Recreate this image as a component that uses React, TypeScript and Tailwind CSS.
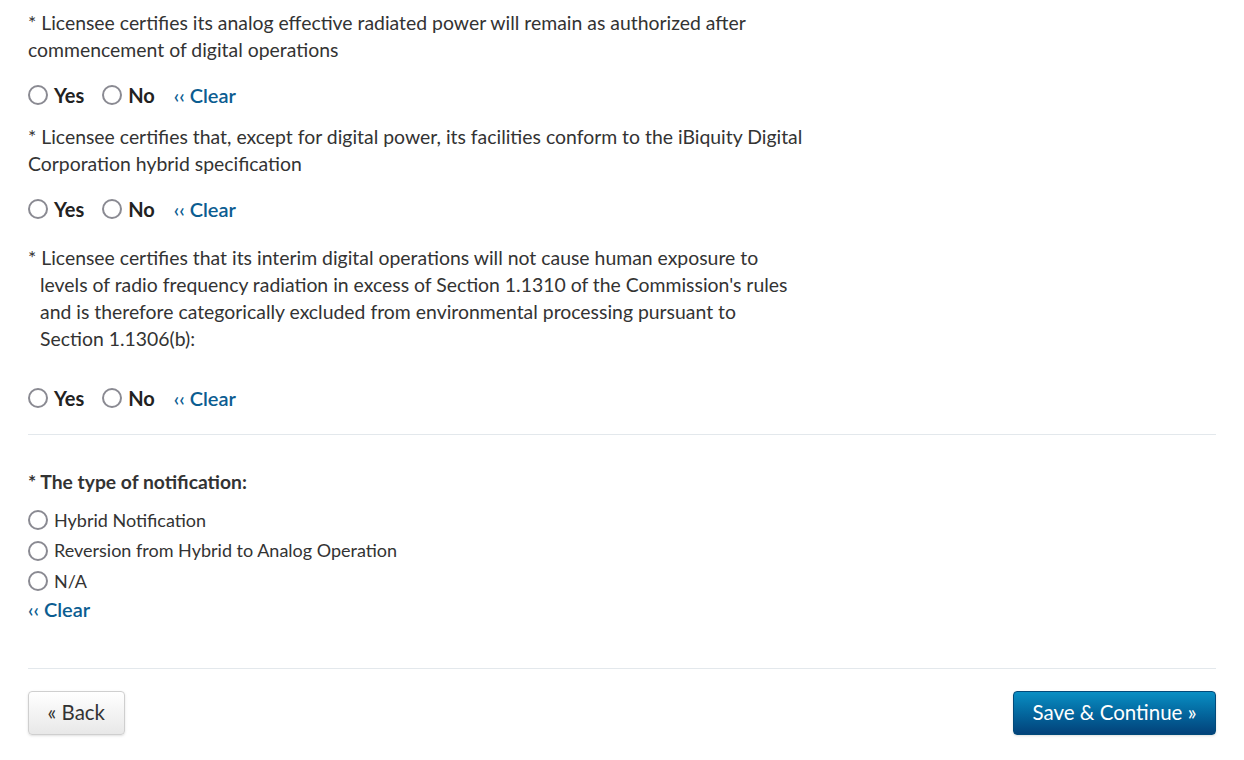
import React, { useState } from 'react';

type YN = 'yes' | 'no' | null;

const Radio: React.FC<{ checked: boolean; onClick: () => void }> = ({ checked, onClick }) => (
  <span
    onClick={onClick}
    className="inline-flex h-[20px] w-[20px] shrink-0 cursor-pointer items-center justify-center rounded-full border-[2.5px] border-[#8a8a92] bg-white"
  >
    {checked && <span className="h-[10px] w-[10px] rounded-full bg-[#0b5d91]" />}
  </span>
);

const ClearLink: React.FC<{ onClick: () => void }> = ({ onClick }) => (
  <a
    href="#"
    onClick={(e) => {
      e.preventDefault();
      onClick();
    }}
    className="text-[20px] font-semibold text-[#0b5d91] hover:underline"
  >
    <span className="mr-[5px] text-[19px]">‹‹</span>Clear
  </a>
);

const YesNo: React.FC<{ value: YN; setValue: (v: YN) => void; className?: string }> = ({
  value,
  setValue,
  className,
}) => (
  <div className={`flex h-[24px] items-center ${className ?? ''}`}>
    <label className="flex items-center gap-[6px]">
      <Radio checked={value === 'yes'} onClick={() => setValue('yes')} />
      <span className="text-[20px] font-bold text-[#222]">Yes</span>
    </label>
    <label className="ml-[18px] flex items-center gap-[6px]">
      <Radio checked={value === 'no'} onClick={() => setValue('no')} />
      <span className="text-[20px] font-bold text-[#222]">No</span>
    </label>
    <span className="ml-[19px]">
      <ClearLink onClick={() => setValue(null)} />
    </span>
  </div>
);

const options = ['Hybrid Notification', 'Reversion from Hybrid to Analog Operation', 'N/A'];

export default function App() {
  const [q1, setQ1] = useState<YN>(null);
  const [q2, setQ2] = useState<YN>(null);
  const [q3, setQ3] = useState<YN>(null);
  const [kind, setKind] = useState<string | null>(null);

  return (
    <div
      className="min-h-screen bg-white px-[28px] text-[19.4px] leading-[27px] text-[#333]"
      style={{ fontFamily: 'Lato, "Open Sans", "Liberation Sans", sans-serif' }}
    >
      <div className="w-[790px] pt-[9px]">
        <p>* Licensee certifies its analog effective radiated power will remain as authorized after commencement of digital operations</p>
        <YesNo value={q1} setValue={setQ1} className="mt-[20px]" />

        <p className="mt-[16px]">
          * Licensee certifies that, except for digital power, its facilities conform to the iBiquity Digital Corporation hybrid specification
        </p>
        <YesNo value={q2} setValue={setQ2} className="mt-[20px]" />

        <p className="mt-[23px] w-[770px] pl-[12px] -indent-[12px]">
          * Licensee certifies that its interim digital operations will not cause human exposure to levels of radio frequency radiation in excess of Section 1.1310 of the Commission's rules and is therefore categorically excluded from environmental processing pursuant to Section 1.1306(b):
        </p>
        <YesNo value={q3} setValue={setQ3} className="mt-[34px]" />
      </div>

      <hr className="mt-[24px] border-t border-[#e3e8ec]" />

      <div className="pt-[33px]">
        <h3 className="text-[19.3px] font-bold leading-[28px] text-[#333]">* The type of notification:</h3>
        <div className="mt-[9px] flex flex-col">
          {options.map((o) => (
            <label key={o} className="flex h-[30.5px] cursor-pointer items-center gap-[6px] text-[18px]">
              <Radio checked={kind === o} onClick={() => setKind(o)} />
              <span>{o}</span>
            </label>
          ))}
        </div>
        <div className="-mt-[2px] leading-[28px]">
          <ClearLink onClick={() => setKind(null)} />
        </div>
      </div>

      <hr className="mt-[44px] border-t border-[#e3e8ec]" />

      <div className="flex items-center justify-between pt-[22px]">
        <button className="h-[44px] rounded-[4px] border border-[#cfcfcf] bg-gradient-to-b from-white to-[#e8e8e8] px-[18.5px] text-[20.5px] text-[#333] shadow-sm">
          « Back
        </button>
        <button className="h-[44px] rounded-[4px] border border-[#024a7a] bg-gradient-to-b from-[#0a8fc4] to-[#03427a] px-[18.5px] text-[20.5px] text-white shadow-sm">
          Save &amp; Continue »
        </button>
      </div>
    </div>
  );
}
